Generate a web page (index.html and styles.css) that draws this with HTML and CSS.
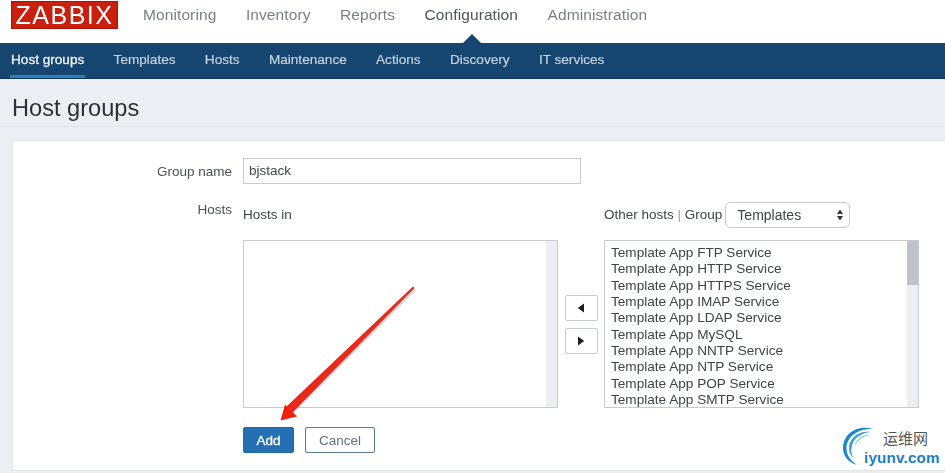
FILE: index.html
```html
<!DOCTYPE html>
<html lang="en">
<head>
<meta charset="utf-8">
<title>Host groups</title>
<link rel="stylesheet" href="styles.css">
</head>
<body>
<div class="page">
  <header class="topbar">
    <div class="logo">ZABBIX</div>
    <nav class="mainnav">
      <a class="mainlink">Monitoring</a>
      <a class="mainlink">Inventory</a>
      <a class="mainlink">Reports</a>
      <a class="mainlink current">Configuration</a>
      <a class="mainlink">Administration</a>
    </nav>
  </header>
  <nav class="subnav">
    <a class="sublink active">Host groups</a>
    <a class="sublink">Templates</a>
    <a class="sublink">Hosts</a>
    <a class="sublink">Maintenance</a>
    <a class="sublink">Actions</a>
    <a class="sublink">Discovery</a>
    <a class="sublink">IT services</a>
  </nav>
  <h1 class="title">Host groups</h1>
  <main class="card">
    <div class="row-name">
      <label class="label">Group name</label>
      <div class="textinput">bjstack</div>
    </div>
    <div class="row-hosts">
      <div class="label label-hosts">Hosts</div>
      <div class="picker">
        <div class="col-left">
          <div class="col-head head-in">Hosts in</div>
          <div class="listbox">
            <div class="items"></div>
            <div class="scroll"></div>
          </div>
        </div>
        <div class="movers">
          <button class="move"><svg width="8" height="10" viewBox="0 0 8 10"><path d="M7 0.5V9.5L0.8 5Z" fill="#1f1f1f"/></svg></button>
          <button class="move"><svg width="8" height="10" viewBox="0 0 8 10"><path d="M1 0.5V9.5L7.2 5Z" fill="#1f1f1f"/></svg></button>
        </div>
        <div class="col-right">
          <div class="col-head head-other">
            <span>Other hosts <span class="sep">|</span> Group</span>
            <div class="dropdown">
              <span>Templates</span>
              <svg width="8" height="14" viewBox="0 0 8 14"><path d="M4 1.500L7 6H1ZM4 12.500L1 8H7Z" fill="#333"/></svg>
            </div>
          </div>
          <div class="listbox">
            <div class="items">
              <div>Template App FTP Service</div>
              <div>Template App HTTP Service</div>
              <div>Template App HTTPS Service</div>
              <div>Template App IMAP Service</div>
              <div>Template App LDAP Service</div>
              <div>Template App MySQL</div>
              <div>Template App NNTP Service</div>
              <div>Template App NTP Service</div>
              <div>Template App POP Service</div>
              <div>Template App SMTP Service</div>
            </div>
            <div class="scroll"><div class="thumb"></div></div>
          </div>
        </div>
      </div>
    </div>
    <div class="actions">
      <button class="btn primary">Add</button>
      <button class="btn ghost">Cancel</button>
    </div>
  </main>
</div>
<svg class="arrow" width="945" height="473" viewBox="0 0 945 473">
  <path d="M414 288L290 413" stroke="#777" stroke-opacity=".3" stroke-width="3" fill="none" transform="translate(1 1)"/>
  <path d="M413 286.500L414.500 288L292 413L286 407Z" fill="#e8291c"/>
  <path d="M280.500 420.500L285 404.500L297 416.500Z" fill="#f0200f"/>
</svg>
<div class="mark">
  <svg class="mark-ring" width="40" height="46" viewBox="0 0 40 46">
    <path d="M31 4C15 -1 1 9 1 23C1 31 6 37 15 40C8 35 4.500 30 4.500 23C4.500 12 16 3 31 4Z" fill="#1c87c9"/>
    <path d="M29 7C17 5 7 13 7 23C7 28 9 31 12 34C9.500 30 9 27 9.500 23C10.500 14 18 8 29 7Z" fill="#3ba0dc"/>
    <path d="M28 10C20 9 13 15 12.500 22C14.500 16 20 11.500 28 10Z" fill="#7cc4ea"/>
  </svg>
  <div class="mark-cn">运维网</div>
  <div class="mark-en">iyunv.com</div>
</div>
</body>
</html>
```

FILE: styles.css
```css
* { box-sizing: border-box; }
html, body { margin: 0; padding: 0; }
body {
  width: 945px;
  height: 473px;
  overflow: hidden;
  position: relative;
  background: #fff;
  font-family: "Liberation Sans", Arial, sans-serif;
  color: #3a3f44;
}
.page { filter: blur(0.45px); height: 473px; background: #ebeef2; overflow: hidden; }

.topbar {
  height: 43px;
  background: #fff;
  display: flex;
  align-items: flex-start;
  padding-left: 11px;
}
.logo {
  width: 107px;
  height: 28px;
  margin-top: 1px;
  background: #cb1f0e;
  border: 1px solid #a8150a;
  color: #fff;
  font-size: 25px;
  line-height: 26px;
  text-align: center;
  letter-spacing: 1.5px;
}
.mainnav { display: flex; margin-left: 25px; gap: 29.5px; padding-top: 6px; height: 43px; }
.mainlink { font-size: 15.5px; line-height: 18px; color: #7a7f85; letter-spacing: 0.1px; white-space: nowrap; }
.mainlink.current { color: #50555b; position: relative; }
.mainlink.current::after {
  content: "";
  position: absolute;
  left: 38px;
  top: 28px;
  width: 0;
  height: 0;
  border-left: 9px solid transparent;
  border-right: 9px solid transparent;
  border-bottom: 9px solid #16466f;
}

.subnav {
  height: 36px;
  background: #16466f;
  border-bottom: 1px solid #0f3557;
  display: flex;
  padding-left: 10px;
  gap: 27.3px;
}
.sublink {
  font-size: 13.6px;
  line-height: 34px;
  color: #c3d3e2;
  -webkit-text-stroke: 0.2px #c3d3e2;
  padding: 0 1px;
  white-space: nowrap;
  height: 35px;
}
.sublink.active {
  color: #f0f4f8;
  -webkit-text-stroke: 0.3px #f0f4f8;
  border-bottom: 3px solid #2f7dbd;
}

.title {
  margin: 0;
  height: 48px;
  padding: 14px 0 0 12px;
  font-size: 23.6px;
  line-height: 30px;
  font-weight: 400;
  color: #2b3036;
  border-bottom: 1px solid #e1e4e8;
}

.card {
  margin: 13px 0 0 12px;
  height: 331px;
  background: #fff;
  border: 1px solid #e0e3e7;
  border-right: 0;
  padding-top: 17px;
  font-size: 13.5px;
  color: #3f4448;
}
.row-name { display: flex; align-items: center; height: 26px; }
.label { width: 219px; text-align: right; margin-right: 11px; color: #4c5156; flex: none; }
.textinput {
  width: 338px;
  height: 26px;
  border: 1px solid #c8cbce;
  padding-left: 5px;
  line-height: 24px;
  background: #fff;
}
.row-hosts { display: flex; margin-top: 15px; }
.label-hosts { line-height: 20px; padding-top: 1px; }
.picker { display: flex; align-items: flex-start; }
.col-head { height: 41px; }
.head-in { padding-top: 6px; line-height: 20px; }
.head-other { display: flex; align-items: flex-start; gap: 3px; line-height: 20px; padding-top: 6px; white-space: nowrap; }
.sep { color: #9a9da0; }
.dropdown {
  width: 125px;
  height: 26px;
  margin-top: -3px;
  border: 1px solid #c8cbce;
  border-radius: 5px;
  display: flex;
  align-items: center;
  justify-content: space-between;
  padding: 0 5px 0 11px;
  font-size: 14px;
  color: #3f4448;
}
.listbox {
  width: 315px;
  height: 168px;
  border: 1px solid #c8cbce;
  display: flex;
  background: #fff;
  overflow: hidden;
}
.items { flex: 1; padding: 4px 0 0 6px; font-size: 13.6px; line-height: 16.33px; color: #3f4448; white-space: nowrap; }
.scroll { width: 11px; background: #ecEEf1; flex: none; }
.thumb { height: 44px; background: #bcc3cb; }
.movers { width: 46px; flex: none; display: flex; flex-direction: column; align-items: center; gap: 7px; padding-top: 96px; }
.move {
  width: 33px;
  height: 26px;
  padding: 0;
  border: 1px solid #c8cbce;
  border-radius: 2px;
  background: #fff;
  display: flex;
  align-items: center;
  justify-content: center;
}
.actions { display: flex; gap: 11px; margin: 19px 0 0 230px; }
.btn {
  height: 26px;
  font: 13.5px "Liberation Sans", Arial, sans-serif;
  border-radius: 2px;
  padding: 0;
}
.primary { width: 51px; background: #2470b3; border: 1px solid #1f68a8; color: #fff; -webkit-text-stroke: 0.3px #fff; }
.ghost { width: 70px; background: #fff; border: 1px solid #5a7a97; color: #5d7183; }

.arrow { position: absolute; left: 0; top: 0; pointer-events: none; filter: blur(0.4px); }
.mark { position: absolute; left: 842px; top: 425px; width: 103px; height: 46px; }
.mark-ring { position: absolute; left: 0; top: 0; }
.mark-cn {
  position: absolute;
  left: 41px;
  top: 4px;
  font-family: "Noto Sans CJK SC", sans-serif;
  font-size: 15px;
  line-height: 18px;
  color: #555;
  white-space: nowrap;
}
.mark-en {
  position: absolute;
  left: 22px;
  top: 24px;
  font-weight: 700;
  font-size: 15.2px;
  line-height: 18px;
  letter-spacing: 0.2px;
  color: #1b7fc4;
  white-space: nowrap;
}
```
